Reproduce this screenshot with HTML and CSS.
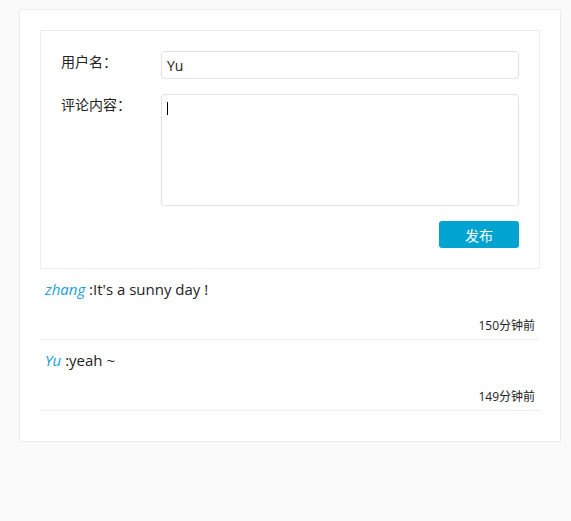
FILE: index.html
```html
<!DOCTYPE html>
<html lang="zh">
<head>
<meta charset="utf-8">
<title>评论</title>
<link rel="stylesheet" href="styles.css">
</head>
<body>
<div class="page">
  <div class="card">
    <form class="form">
      <div class="row">
        <label class="label">用户名：</label>
        <input class="input" type="text" value="Yu">
      </div>
      <div class="row">
        <label class="label">评论内容：</label>
        <div class="area-wrap">
          <textarea class="textarea"></textarea>
          <span class="caret"></span>
        </div>
      </div>
      <div class="actions">
        <button type="button" class="btn">发布</button>
      </div>
    </form>
    <ul class="comments">
      <li class="comment">
        <p class="text"><span class="name">zhang</span> :It's a sunny day !</p>
        <div class="time">150分钟前</div>
      </li>
      <li class="comment">
        <p class="text"><span class="name">Yu</span> :yeah ~</p>
        <div class="time">149分钟前</div>
      </li>
    </ul>
  </div>
</div>
</body>
</html>
```
FILE: styles.css
```css
html, body {
  margin: 0;
  padding: 0;
  background: #fafafa;
  font-family: "Open Sans", "Noto Sans CJK SC", sans-serif;
  font-size: 14px;
  color: #222;
}
.page {
  padding: 9px 10px 0 19px;
}
.card {
  width: 500px;
  background: #fff;
  border: 1px solid #ececec;
  padding: 20px 20px 30px;
}
.form {
  border: 1px solid #ececec;
  padding: 20px;
  margin: 0;
}
.row {
  display: flex;
  margin-bottom: 15px;
}
.label {
  width: 100px;
  flex: none;
  line-height: 20px;
  padding-top: 1px;
}
.input, .textarea {
  box-sizing: border-box;
  border: 1px solid #e2e2e2;
  border-radius: 3px;
  padding: 0 5px;
  font-family: "Open Sans", "Noto Sans CJK SC", sans-serif;
  font-size: 14px;
  color: #222;
  outline: none;
  margin: 0;
}
.input {
  flex: 1;
  height: 28px;
}
.area-wrap {
  flex: 1;
  position: relative;
}
.textarea {
  width: 100%;
  height: 112px;
  resize: none;
  padding-top: 4px;
  display: block;
}
.caret {
  position: absolute;
  left: 6px;
  top: 8px;
  width: 1px;
  height: 13px;
  background: #000;
}
.actions {
  display: flex;
  justify-content: flex-end;
}
.btn {
  width: 80px;
  height: 27px;
  border: none;
  border-radius: 3px;
  background: #01a3d0;
  color: #fff;
  font-family: "Noto Sans CJK SC", sans-serif;
  font-size: 14px;
  padding: 0;
}
.comments {
  list-style: none;
  margin: 0;
  padding: 0;
}
.comment {
  border-bottom: 1px solid #eeeeee;
  padding: 10px 5px 3px;
}
.text {
  margin: 0 0 17px;
  line-height: 20px;
  font-size: 15px;
}
.name {
  color: #1a9fd6;
  font-style: italic;
}
.time {
  text-align: right;
  font-size: 12px;
  line-height: 20px;
}
```
